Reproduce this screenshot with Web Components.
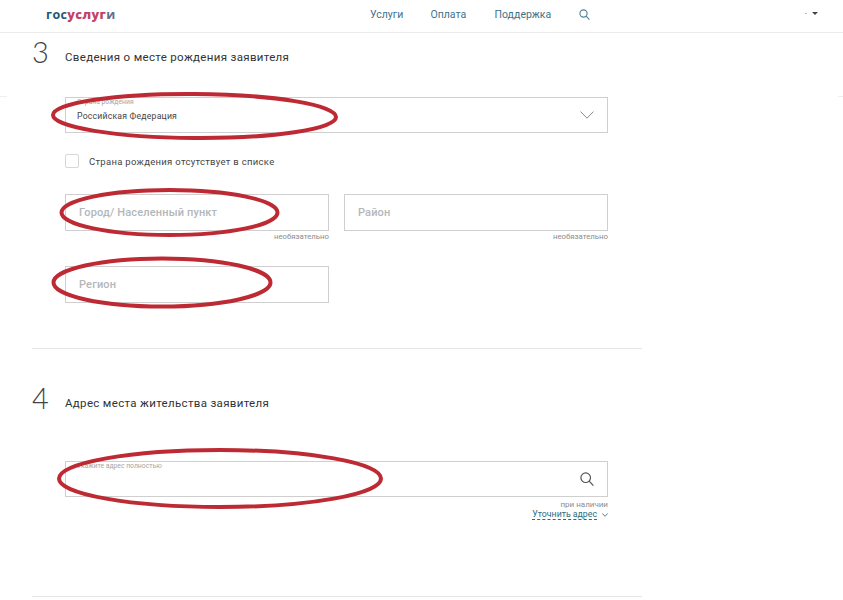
<!DOCTYPE html>
<html lang="ru">
<head>
<meta charset="utf-8">
<title>Госуслуги</title>
<style>
  html, body { margin: 0; background: #fff; }
  body { font-family: "Roboto", "Liberation Sans", sans-serif; color: #333; height: 600px; overflow: hidden; }
</style>
</head>
<body>
<gu-page>
  <gu-header></gu-header>
  <gu-section num="3" heading="Сведения о месте рождения заявителя" style="--top: 40px; --gap: 24px; --pad-bottom: 45px">
    <gu-field kind="select" label="Страна рождения" value="Российская Федерация"></gu-field>
    <gu-check>Страна рождения отсутствует в списке</gu-check>
    <gu-row>
      <gu-field placeholder="Город/ Населенный пункт" hint="необязательно"></gu-field>
      <gu-field placeholder="Район" hint="необязательно"></gu-field>
    </gu-row>
    <gu-row style="margin-top: 25px">
      <gu-field placeholder="Регион"></gu-field>
    </gu-row>
  </gu-section>
  <gu-section num="4" heading="Адрес места жительства заявителя" style="--top: 70px; --gap: 42px; --pad-bottom: 0; --hint-size: 8px; --hint-pad: 3px">
    <gu-field kind="search" label="Укажите адрес полностью" hint="при наличии"></gu-field>
    <gu-more>Уточнить адрес</gu-more>
  </gu-section>
</gu-page>

<script>
class GuPage extends HTMLElement {
    constructor() {
        super();
        this.attachShadow({mode: 'open'});
        this.shadowRoot.innerHTML = `
            <style>
                :host { display: block; position: relative; width: 843px; height: 600px; overflow: hidden; }
                .rings { position: absolute; left: 0; top: 0; pointer-events: none; }
                ellipse { fill: none; stroke: #bd2a33; stroke-width: 4; }
                .tick { position: absolute; top: 96px; height: 1px; background: #eee; }
            </style>
            <slot></slot>
            <div class="tick" style="left:0;width:7px"></div>
            <div class="tick" style="right:0;width:5px"></div>
            <svg class="rings" width="843" height="600" viewBox="0 0 843 600">
                <ellipse cx="194.5" cy="116" rx="141.5" ry="22" transform="rotate(0.4 194 116)"/>
                <ellipse cx="169.5" cy="212.5" rx="108" ry="22.5"/>
                <ellipse cx="162" cy="282.5" rx="108.5" ry="24"/>
                <ellipse cx="220" cy="478.5" rx="161" ry="28.5"/>
            </svg>
        `;
    }
}

class GuHeader extends HTMLElement {
    constructor() {
        super();
        this.attachShadow({mode: 'open'});
        this.shadowRoot.innerHTML = `
            <style>
                :host {
                    display: flex;
                    align-items: center;
                    box-sizing: border-box;
                    height: 33px;
                    padding: 0 0 3px 46px;
                    border-bottom: 1px solid #ececec;
                }
                .logo { font: 700 12.5px "Open Sans", "Liberation Sans", sans-serif; letter-spacing: 0.4px; color: #1f5878; width: 324px; }
                .logo b { color: #bf4468; }
                .logo i { font-style: normal; color: #5f6f8c; }
                nav { display: flex; align-items: center; font-size: 10.5px; color: #3f7189; }
                nav span:nth-child(1) { width: 60.5px; }
                nav span:nth-child(2) { width: 64px; }
                nav span:nth-child(3) { width: 84px; }
                svg { display: block; }
                .dash { margin-left: 215px; width: 2px; height: 1px; margin-bottom: 2px; background: #bbb; }
                .caret { margin-left: 5px; width: 0; height: 0; border: 3px solid transparent; border-top: 3px solid #444; border-bottom: 0; margin-bottom: 3px; }
            </style>
            <div class="logo">гос<b>услуг</b><i>и</i></div>
            <nav>
                <span>Услуги</span><span>Оплата</span><span>Поддержка</span>
                <svg width="11" height="11" viewBox="0 0 11 11" fill="none" stroke="#4f7f98" stroke-width="1.1">
                    <circle cx="4.5" cy="4.5" r="3.6"/><path d="M7.2 7.2 10.4 10.6"/>
                </svg>
            </nav>
            <div class="dash"></div>
            <div class="caret"></div>
        `;
    }
}

class GuSection extends HTMLElement {
    constructor() {
        super();
        this.attachShadow({mode: 'open'});
        this.shadowRoot.innerHTML = `
            <style>
                :host { display: block; box-sizing: border-box; width: 610px; margin-left: 32px; padding-bottom: var(--pad-bottom, 0); border-bottom: 1px solid #e6e6e6; }
                .top { display: flex; align-items: flex-end; height: var(--top, 40px); }
                .num { width: 33px; margin-bottom: 2px; font: 300 29px/38px "Lato", "Open Sans", sans-serif; color: #444; }
                h2 { margin: 0 0 8px; font: 400 11.5px/16px "Roboto", "Liberation Sans", sans-serif; letter-spacing: 0.33px; color: #333; }
                .body { padding: var(--gap, 30px) 34px 0 33px; }
            </style>
            <div class="top">
                <div class="num">${this.getAttribute('num')}</div>
                <h2>${this.getAttribute('heading')}</h2>
            </div>
            <div class="body"><slot></slot></div>
        `;
    }
}

class GuRow extends HTMLElement {
    constructor() {
        super();
        this.attachShadow({mode: 'open'});
        this.shadowRoot.innerHTML = `
            <style>
                :host { display: grid; grid-template-columns: 264px 264px; column-gap: 15px; }
            </style>
            <slot></slot>
        `;
    }
}

class GuField extends HTMLElement {
    constructor() {
        super();
        this.attachShadow({mode: 'open'});
        const label = this.getAttribute('label');
        const value = this.getAttribute('value');
        const placeholder = this.getAttribute('placeholder');
        const hint = this.getAttribute('hint');
        const kind = this.getAttribute('kind');
        let icon = '';
        if(kind === 'select') {
            icon = `<svg width="14" height="8" viewBox="0 0 14 8" fill="none" stroke="#8a8a8a" stroke-width="1"><path d="M.6.6 7 7.2 13.4.6"/></svg>`;
        }
        if(kind === 'search') {
            icon = `<svg width="14" height="14" viewBox="0 0 14 14" fill="none" stroke="#555" stroke-width="1.2"><circle cx="5.7" cy="5.7" r="4.8"/><path d="M9.2 9.2 13.4 13.6"/></svg>`;
        }
        this.shadowRoot.innerHTML = `
            <style>
                :host { display: block; }
                .box {
                    position: relative;
                    display: flex;
                    align-items: center;
                    justify-content: space-between;
                    box-sizing: border-box;
                    height: ${kind ? 36 : 37}px;
                    padding: 0 13.5px 0 ${placeholder ? 13 : 11}px;
                    border: 1px solid #cfcfcf;
                }
                .label { position: absolute; left: 11px; top: 0; font-size: 6.8px; line-height: 9px; color: #a5a5a5; }
                .value { font-size: 8.7px; padding-top: 1px; letter-spacing: 0.2px; color: #444; }
                .ph { font-size: 11px; font-weight: 500; color: #b3b7ba; letter-spacing: 0.15px; }
                .hint { font-size: var(--hint-size, 7.8px); line-height: 9px; height: 9px; padding-top: var(--hint-pad, 1px); text-align: right; color: #8c8c8c; }
            </style>
            <div class="box">
                ${label ? `<div class="label">${label}</div>` : ''}
                <div class="${placeholder ? 'ph' : 'value'}">${placeholder || value || ''}</div>
                ${icon}
            </div>
            ${hint ? `<div class="hint">${hint}</div>` : ''}
        `;
    }
}

class GuCheck extends HTMLElement {
    constructor() {
        super();
        this.attachShadow({mode: 'open'});
        this.shadowRoot.innerHTML = `
            <style>
                :host { display: flex; align-items: center; height: 14px; margin: 21px 0 26px; font-size: 9.5px; letter-spacing: 0.3px; color: #444; }
                .square { box-sizing: border-box; width: 14px; height: 14px; margin-right: 10px; border: 1px solid #d6d6d6; border-radius: 2px; }
            </style>
            <div class="square"></div>
            <slot></slot>
        `;
    }
}

class GuMore extends HTMLElement {
    constructor() {
        super();
        this.attachShadow({mode: 'open'});
        this.shadowRoot.innerHTML = `
            <style>
                :host { display: flex; justify-content: flex-end; align-items: center; gap: 5px; height: 13px; margin-top: -1px; margin-bottom: 75px; font-size: 8.75px; color: #2c6a80; }
                span { border-bottom: 1px dashed #2c6a80; line-height: 10px; }
            </style>
            <span><slot></slot></span>
            <svg width="6" height="4" viewBox="0 0 6 4" fill="none" stroke="#5d7f8f"><path d="M.3.4 3 3.3 5.7.4"/></svg>
        `;
    }
}

customElements.define('gu-page', GuPage);
customElements.define('gu-header', GuHeader);
customElements.define('gu-section', GuSection);
customElements.define('gu-row', GuRow);
customElements.define('gu-field', GuField);
customElements.define('gu-check', GuCheck);
customElements.define('gu-more', GuMore);
</script>
</body>
</html>
